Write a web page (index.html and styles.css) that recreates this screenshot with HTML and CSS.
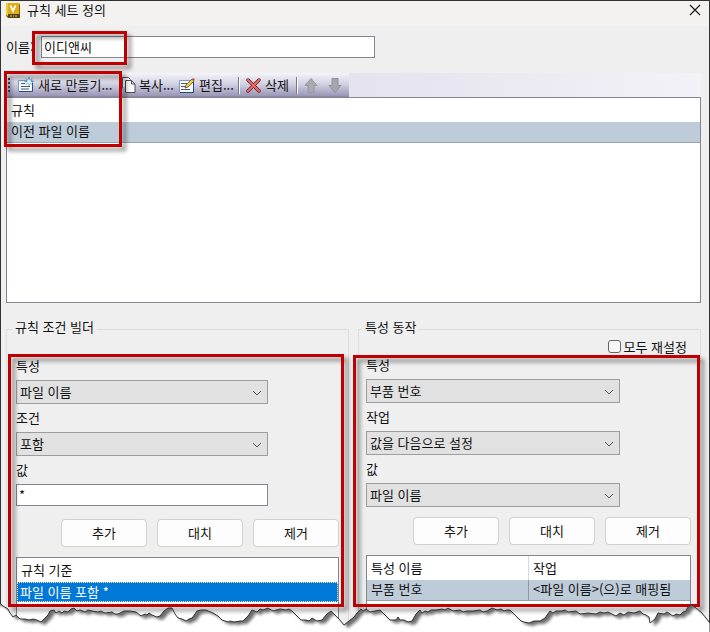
FILE: index.html
```html
<!DOCTYPE html>
<html lang="ko">
<head>
<meta charset="utf-8">
<title>규칙 세트 정의</title>
<link rel="stylesheet" href="styles.css">
</head>
<body>
<div class="page">
<div class="window">
  <header class="titlebar">
    <svg class="app-icon" width="14" height="17" viewBox="0 0 14 17" aria-hidden="true">
      <path d="M0 1h13l1 2v13H2L0 14z" fill="#8a6500"/>
      <path d="M0 1h13v11H0z" fill="#e0ac18"/>
      <path d="M0 1h2v13l-2-1z" fill="#f0c83c"/>
      <path d="M2 12h12v4H2z" fill="#5b4508"/>
      <path d="M4.500 3.500L7 9l2.500-5.500" fill="none" stroke="#fff" stroke-width="1.800"/>
      <path d="M4 14h2m1 0h1m1 0h2" stroke="#cfc096"/>
    </svg>
    <h1>규칙 세트 정의</h1>
    <button class="close" type="button" aria-label="닫기">
      <svg width="12" height="12" viewBox="0 0 12 12"><path d="M1 1l10 10M11 1L1 11" stroke="#1a1a1a" stroke-width="1.200"/></svg>
    </button>
  </header>

  <main>
    <div class="name-row">
      <label for="name">이름:</label>
      <input id="name" class="text" type="text" value="이디앤씨">
      <span class="mark mark-name"></span>
    </div>

    <section class="rules">
      <div class="toolbar">
        <div class="tools">
          <svg class="grip" width="3" height="17" viewBox="0 0 3 17"><path d="M1 1v2m0 2v2m0 2v2m0 2v2" stroke="#45435f" stroke-width="2"/></svg>
          <button class="tool new" type="button">
            <svg width="16" height="16" viewBox="0 0 16 16">
              <path d="M.5 3.500h14v11H.5z" fill="#f6f9ff" stroke="#7f9cc6"/><path d="M1 14.500h13.500V6" fill="none" stroke="#2d4f88"/>
              <path d="M3 6.500h4M3 9.500h9M3 12h8" stroke="#4d5c76"/>
              <path d="M11 0v9M6.500 4.500h9M8 1.500l6 6M14 1.500l-6 6" stroke="#4a98cf"/><circle cx="11" cy="4.500" r="2" fill="#e8f8ff"/>
            </svg><span>새로 만들기...</span></button>
          <button class="tool copy" type="button">
            <svg width="14" height="16" viewBox="0 0 14 16">
              <path d="M.5 11.500v-11h6l2 2" fill="#fff" stroke="#555"/>
              <path d="M3.500 3.500h6l3.500 3.500v8.500H3.500z" fill="#fbfbff" stroke="#4c4c55"/><path d="M9.500 3.500V7H13" fill="none" stroke="#4c4c55"/>
            </svg><span>복사...</span></button>
          <button class="tool edit" type="button">
            <svg width="16" height="16" viewBox="0 0 16 16">
              <path d="M.5 3.500h14v12H.5z" fill="#f6f9ff" stroke="#7f9cc6"/><path d="M1 15.500h13.500V4" fill="none" stroke="#24477f"/>
              <path d="M2 6.500h6M2 9.500h5M2 12.500h9" stroke="#4d5c76"/>
              <path d="M6 11l1-3 6-6 2 2-6 6z" fill="#f3cf49" stroke="#5e4a14" stroke-width=".8"/><path d="M12.500 2.500L14 1l2 1.500L14.500 4z" fill="#cf4b36"/>
            </svg><span>편집...</span></button>
          <i class="sep"></i>
          <button class="tool delete" type="button">
            <svg width="15" height="15" viewBox="0 0 15 15"><path d="M2 2l11 11M13 2L2 13" stroke="#5f2028" stroke-width="3.400" stroke-linecap="round"/><path d="M2 2l11 11M13 2L2 13" stroke="#ec6a63" stroke-width="2" stroke-linecap="round"/></svg><span>삭제</span></button>
          <i class="sep"></i>
          <button class="tool move" type="button" aria-label="위로" disabled>
            <svg width="14" height="15" viewBox="0 0 14 15"><path d="M7 .5l6 7h-3v7H4v-7H1z" fill="#a9a9ae" stroke="#96969d"/></svg></button>
          <button class="tool move" type="button" aria-label="아래로" disabled>
            <svg width="14" height="15" viewBox="0 0 14 15"><path d="M7 14.500l6-7h-3v-7H4v7H1z" fill="#a5a5ab" stroke="#92929a"/></svg></button>
        </div>
      </div>
      <div class="list">
        <table>
          <thead><tr><th>규칙</th></tr></thead>
          <tbody><tr class="picked"><td>이전 파일 이름</td></tr></tbody>
        </table>
      </div>
      <span class="mark mark-rules"></span>
    </section>

    <div class="panels">
      <section class="panel conditions">
        <fieldset>
          <legend>규칙 조건 빌더</legend>
          <div class="top-line"></div>
          <label for="c-prop">특성</label>
          <div class="combo"><select id="c-prop"><option>파일 이름</option></select>
            <svg width="10" height="6" viewBox="0 0 10 6"><path d="M1 1l4 4 4-4" fill="none" stroke="#555"/></svg></div>
          <label for="c-cond">조건</label>
          <div class="combo"><select id="c-cond"><option>포함</option></select>
            <svg width="10" height="6" viewBox="0 0 10 6"><path d="M1 1l4 4 4-4" fill="none" stroke="#555"/></svg></div>
          <label for="c-value">값</label>
          <div class="field"><input id="c-value" class="text" type="text" value="*"></div>
          <div class="buttons"><button type="button">추가</button><button type="button">대치</button><button type="button">제거</button></div>
          <div class="grid">
            <table>
              <thead><tr><th>규칙 기준</th></tr></thead>
              <tbody><tr class="focused"><td>파일 이름 포함 *</td></tr></tbody>
            </table>
          </div>
        </fieldset>
        <span class="mark mark-conditions"></span>
      </section>

      <section class="panel actions">
        <fieldset>
          <legend>특성 동작</legend>
          <div class="top-line"><input id="reset" type="checkbox"><label for="reset">모두 재설정</label></div>
          <label for="a-prop">특성</label>
          <div class="combo"><select id="a-prop"><option>부품 번호</option></select>
            <svg width="10" height="6" viewBox="0 0 10 6"><path d="M1 1l4 4 4-4" fill="none" stroke="#555"/></svg></div>
          <label for="a-work">작업</label>
          <div class="combo"><select id="a-work"><option>값을 다음으로 설정</option></select>
            <svg width="10" height="6" viewBox="0 0 10 6"><path d="M1 1l4 4 4-4" fill="none" stroke="#555"/></svg></div>
          <label for="a-value">값</label>
          <div class="combo"><select id="a-value"><option>파일 이름</option></select>
            <svg width="10" height="6" viewBox="0 0 10 6"><path d="M1 1l4 4 4-4" fill="none" stroke="#555"/></svg></div>
          <div class="buttons"><button type="button">추가</button><button type="button">대치</button><button type="button">제거</button></div>
          <div class="grid">
            <table>
              <thead><tr><th>특성 이름</th><th>작업</th></tr></thead>
              <tbody><tr class="picked"><td>부품 번호</td><td>&lt;파일 이름&gt;(으)로 매핑됨</td></tr></tbody>
            </table>
          </div>
        </fieldset>
        <span class="mark mark-actions"></span>
      </section>
    </div>
  </main>
</div>

<svg class="torn" viewBox="0 0 710 36" preserveAspectRatio="none" aria-hidden="true">
  <defs>
    <path id="blank" d="M-20 7H0L3 10 8 13 10 17 13 21 16 19 20 23 25 23 29 24 33 23 37 24 41 26 44 23 48 19 50 15 54 14 56 17 59 15 62 17 64 15 68 16 71 13 74 12 77 15 80 14 85 16 88 14 92 15 98 16 101 15 105 17 112 16 115 18 118 18 124 15 130 15 136 16 141 20 145 18 147 19 149 17 152 19 157 21 160 20 164 15 168 12 172 12 175 18 178 22 182 23 186 25 189 23 192 22 195 18 197 15 201 14 206 14 213 17 218 20 222 24 225 25 228 26 230 25 234 26 240 25 243 25 248 20 252 14 257 16 260 13 263 14 268 12 273 15 280 13 286 14 289 13 292 15 297 20 301 24 306 24 309 25 312 22 317 25 322 24 327 18 331 15 335 19 339 23 344 29 349 25 354 21 357 17 361 13 363 15 366 13 370 16 375 15 380 14 384 18 386 20 390 24 396 24 398 21 400 24 404 24 408 26 412 25 416 18 420 14 422 17 425 15 428 16 431 14 436 14 442 13 445 14 448 12 453 15 460 14 463 16 467 15 473 15 480 14 483 16 487 15 492 12 497 14 501 13 504 15 507 14 510 14 514 18 518 22 521 25 524 26 529 27 534 25 540 25 545 22 550 15 553 17 556 15 562 15 565 14 568 16 576 15 580 18 588 17 596 18 600 16 604 17 608 16 612 18 616 20 620 17 624 19 628 16 634 17 640 15 643 18 646 19 649 21 650 27 655 23 658 17 664 18 667 16 670 18 673 20 676 18 680 19 683 16 686 15 688 11 692 9 696 12 702 17 710 27V60H-20z"/>
    <clipPath id="below"><use href="#blank"/></clipPath>
    <mask id="paper" maskUnits="userSpaceOnUse" x="-20" y="-20" width="750" height="80">
      <path d="M-20-20h750v80H-20z" fill="#fff"/>
      <use href="#blank" fill="#000"/>
    </mask>
    <filter id="soft" filterUnits="userSpaceOnUse" x="-20" y="-20" width="750" height="80"><feGaussianBlur stdDeviation="1.500"/></filter>
  </defs>
  <g clip-path="url(#below)">
    <path d="M0 0h710v36H0z" fill="#fff"/>
    <g transform="translate(4 3)" opacity=".6">
      <g filter="url(#soft)"><path d="M-10-10h730v60H-10z" fill="#111" mask="url(#paper)"/></g>
    </g>
  </g>
  <use href="#blank" fill="none" stroke="#333"/>
</svg>
</div>
</body>
</html>
```
FILE: styles.css
```css
* { box-sizing: border-box; }

body {
  margin: 0;
  background: #fff;
  color: #111;
  font: 13px/18px "Noto Sans CJK KR", sans-serif;
}

button, input, select { font: inherit; color: inherit; margin: 0; }

.page { position: relative; overflow: hidden; }

.window {
  display: flex;
  flex-direction: column;
  min-height: 100vh;
  background: #efefef;
  border: 1px solid #333;
  border-bottom: 0;
}

.titlebar {
  display: flex;
  align-items: center;
  height: 25px;
  padding: 0 8px 6px 5px;
  background: #f3f2f0;
}
.titlebar h1 { flex: 1; margin: 0 0 0 7px; padding-bottom: 2px; font-size: 13px; font-weight: 400; }
.close { display: flex; padding: 0 0 2px; border: 0; background: none; }

main { flex: 1; display: flex; flex-direction: column; padding: 10px 8px 0 5px; }

.name-row { position: relative; display: flex; align-items: center; }
.name-row label { width: 35px; white-space: nowrap; }
.text {
  height: 22px;
  padding: 0 2px 2px;
  border: 1px solid #83868f;
  background: #fff;
}
.name-row .text { width: 334px; }

.rules { position: relative; margin-top: 15px; }
.toolbar { display: flex; background: linear-gradient(90deg, #dedded, #e4e3ee 50%, #f3f2f8); }
.tools {
  display: flex;
  align-items: center;
  width: 343px;
  height: 24px;
  padding-left: 2px;
  background: linear-gradient(#f4f4fa, #d3d2e3 45%, #9896b5 96%, #7f7c99);
}
.grip { flex: none; }
.tool {
  display: flex;
  flex: none;
  align-items: center;
  gap: 4px;
  padding: 0;
  border: 0;
  background: none;
  white-space: nowrap;
}
.tool svg { flex: none; }
.tool span { padding-bottom: 1px; }
.new { width: 104px; margin-left: 7px; }
.copy { width: 50px; gap: 3px; }
.edit { width: 53px; margin-left: 7px; }
.sep {
  flex: none;
  width: 2px;
  height: 17px;
  margin: 0 6px;
  background: linear-gradient(90deg, #77748f 50%, #fff 50%);
}
.delete { width: 44px; }
.move { width: 14px; }
.move + .move { margin-left: 10px; }

.list { height: 206px; border: 1px solid #83868f; background: #fff; }
table { width: 100%; border-collapse: collapse; table-layout: fixed; }
th, td { padding: 0 4px; text-align: left; font-weight: 400; white-space: nowrap; }
th { height: 24px; }
td { height: 20px; padding-bottom: 2px; border-bottom: 1px solid #9ba2ab; line-height: 17px; }
.picked td { background: #becbd9; }

.panels { flex: 1; display: grid; grid-template-columns: 1fr 1fr; gap: 9px; margin-top: 17px; }
.panel { position: relative; display: flex; min-width: 0; }
fieldset {
  flex: 1;
  min-width: 0;
  margin: 0;
  padding: 0 9px;
  border: 1px solid #dcdcdc;
  border-bottom: 0;
}
.actions fieldset { padding-left: 7px; }
legend { height: 18px; margin-left: -4px; padding: 0 3px; line-height: 14px; }
.top-line { display: flex; justify-content: flex-end; align-items: center; gap: 3px; height: 17px; padding-right: 4px; }
.conditions .top-line { height: 18px; }
.top-line input {
  appearance: none;
  width: 13px;
  height: 13px;
  border: 1px solid #666;
  border-radius: 3px;
  background: #f7f7f7;
}
fieldset > label { display: block; height: 24px; padding-bottom: 4px; line-height: 20px; }
.combo { position: relative; width: 254px; max-width: 100%; height: 24px; margin-bottom: 4px; }
.conditions .combo { width: 252px; }
.combo select {
  display: block;
  appearance: none;
  width: 100%;
  height: 100%;
  padding: 0 24px 1px 3px;
  border: 1px solid #9d9d9d;
  border-radius: 0;
  background: #e1e1e1;
}
.combo svg { position: absolute; top: 10px; right: 6px; pointer-events: none; }
.field { height: 24px; margin-bottom: 4px; }
.field .text { width: 252px; }

.buttons { display: flex; justify-content: flex-end; gap: 10px; padding: 6px 0 10px; }
.conditions .buttons { padding-top: 7px; }
.buttons button {
  width: 86px;
  height: 28px;
  padding: 0 0 1px;
  border: 1px solid #d0d0d0;
  border-radius: 4px;
  background: #fdfdfd;
}

.grid { min-height: 75px; border: 1px solid #83868f; border-bottom: 0; background: #fff; }
.grid th + th, .grid td + td { border-left: 1px solid #d9d9d9; }
.grid td + td { border-left-color: #8f98a3; }
.focused td {
  padding: 0 3px 2px;
  border: 0;
  background: #0078d7;
  color: #fff;
  outline: 1px dotted #fff;
  outline-offset: -1px;
}

.mark {
  position: absolute;
  border: 3px solid #c00000;
  filter: drop-shadow(4px 4px 2px rgba(0, 0, 0, .45));
  pointer-events: none;
}
.mark-name { left: 26px; top: -5px; width: 95px; height: 34px; }
.mark-rules { left: -2px; top: -2px; width: 118px; height: 76px; }
.mark-conditions { left: 2px; right: 5px; top: 34px; height: 253px; }
.mark-actions { left: -5px; right: 1px; top: 35px; height: 252px; }

.torn { position: absolute; left: 0; bottom: 0; width: 100%; height: 36px; }
```
